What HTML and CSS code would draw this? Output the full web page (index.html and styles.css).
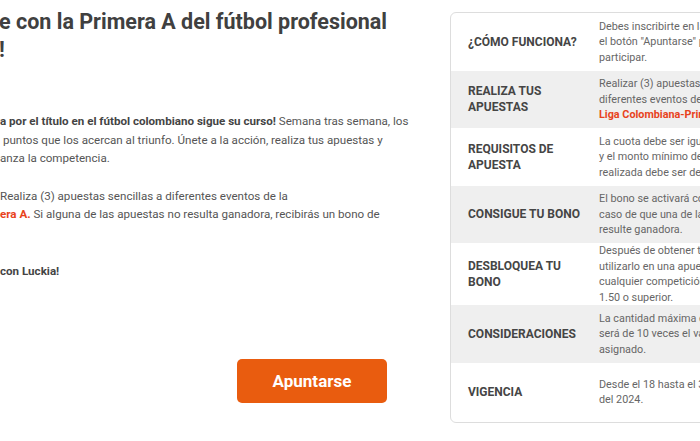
FILE: index.html
```html
<!DOCTYPE html>
<html>
<head>
    <title>Primera A - Luckia</title>
    <link rel="stylesheet" href="styles.css">
</head>
<body>
    <div class="page">
        <div class="main">
            <h1 class="title">e con la Primera A del fútbol profesional<br>!</h1>

            <p class="text first">
                <b>a por el título en el fútbol colombiano sigue su curso!</b> Semana tras semana, los<br>
                &nbsp;puntos que los acercan al triunfo. Únete a la acción, realiza tus apuestas y<br>
                anza la competencia.
            </p>

            <p class="text">
                Realiza (3) apuestas sencillas a diferentes eventos de la<br>
                <b class="red">era A.</b> Si alguna de las apuestas no resulta ganadora, recibirás un bono de
            </p>

            <p class="text last"><b>con Luckia!</b></p>

            <div class="actions">
                <a class="btn" href="#">Apuntarse</a>
            </div>
        </div>

        <div class="card">
            <div class="row">
                <div class="label">¿CÓMO FUNCIONA?</div>
                <div class="desc">Debes inscribirte en la promoción haciendo clic en<br>el botón "Apuntarse" para poder<br>participar.</div>
            </div>
            <div class="row alt">
                <div class="label">REALIZA TUS<br>APUESTAS</div>
                <div class="desc">Realizar (3) apuestas sencillas a<br>diferentes eventos de la<br><b class="red">Liga Colombiana-Primera A.</b></div>
            </div>
            <div class="row">
                <div class="label">REQUISITOS DE<br>APUESTA</div>
                <div class="desc">La cuota debe ser igual o superior a 1.50<br>y el monto mínimo de cada apuesta<br>realizada debe ser de $10.000.</div>
            </div>
            <div class="row alt">
                <div class="label">CONSIGUE TU BONO</div>
                <div class="desc">El bono se activará como apuesta gratis en<br>caso de que una de las apuestas no<br>resulte ganadora.</div>
            </div>
            <div class="row">
                <div class="label">DESBLOQUEA TU<br>BONO</div>
                <div class="desc">Después de obtener tu bono, podrás<br>utilizarlo en una apuesta sencilla en<br>cualquier competición con una cuota de<br>1.50 o superior.</div>
            </div>
            <div class="row alt">
                <div class="label">CONSIDERACIONES</div>
                <div class="desc">La cantidad máxima de ganancias<br>será de 10 veces el valor del bono<br>asignado.</div>
            </div>
            <div class="row">
                <div class="label">VIGENCIA</div>
                <div class="desc">Desde el 18 hasta el 31 de julio<br>del 2024.</div>
            </div>
        </div>
    </div>
</body>
</html>
```

FILE: styles.css
```css
body {
    margin: 0;
    overflow: hidden;
    font-family: Roboto, "Liberation Sans", sans-serif;
    background: #fff;
    color: #555;
}
.page {
    display: flex;
    align-items: flex-start;
}
.main {
    width: 387px;
    flex-shrink: 0;
    display: flex;
    flex-direction: column;
}
.title {
    margin: 8px 0 0 -1px;
    font-size: 21.5px;
    line-height: 28px;
    font-weight: 700;
    color: #404040;
    white-space: nowrap;
}
.text {
    margin: 19px 0 0;
    font-size: 11.6px;
    line-height: 18.5px;
    white-space: nowrap;
}
.text b {
    color: #444;
}
.text.first {
    margin-top: 48px;
}
.text.last {
    margin-top: 38px;
}
.red {
    color: #e8431c !important;
}
.actions {
    display: flex;
    justify-content: flex-end;
    margin-top: 79px;
}
.btn {
    width: 150px;
    height: 44px;
    background: #e95c0f;
    border-radius: 5px;
    color: #fff;
    font-size: 17px;
    font-weight: 700;
    text-decoration: none;
    display: flex;
    justify-content: center;
    align-items: center;
}
.card {
    margin: 12px 0 0 63px;
    width: 330px;
    flex-shrink: 0;
    border: 1px solid #ddd;
    border-radius: 6px;
    overflow: hidden;
}
.row {
    display: flex;
    align-items: center;
    min-height: 57.5px;
}
.row:last-child {
    min-height: 59px;
}
.row.alt {
    background: #efefef;
}
.label {
    width: 131px;
    padding-left: 17px;
    font-size: 12px;
    line-height: 16px;
    font-weight: 700;
    color: #454545;
    flex-shrink: 0;
}
.desc {
    font-size: 10.8px;
    line-height: 15.5px;
    color: #666;
    white-space: nowrap;
}
```
